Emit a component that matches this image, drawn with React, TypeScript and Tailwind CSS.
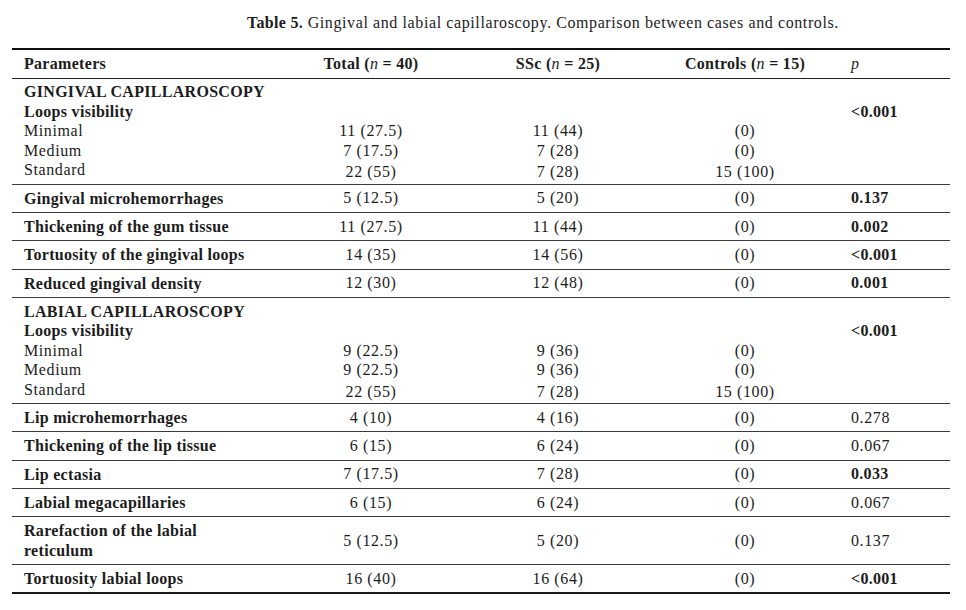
const serif = { fontFamily: '"Liberation Serif", "Times New Roman", serif' };

type Row = {
  label: string;
  total: string;
  ssc: string;
  ctrl: string;
  p: string;
  pBold?: boolean;
  twoLine?: boolean;
};

type Group = {
  title: string;
  p: string;
  lines: { label: string; total: string; ssc: string; ctrl: string }[];
};

const gingival: Group = {
  title: 'GINGIVAL CAPILLAROSCOPY',
  p: '<0.001',
  lines: [
    { label: 'Minimal', total: '11 (27.5)', ssc: '11 (44)', ctrl: '(0)' },
    { label: 'Medium', total: '7 (17.5)', ssc: '7 (28)', ctrl: '(0)' },
    { label: 'Standard', total: '22 (55)', ssc: '7 (28)', ctrl: '15 (100)' },
  ],
};

const gingivalRows: Row[] = [
  { label: 'Gingival microhemorrhages', total: '5 (12.5)', ssc: '5 (20)', ctrl: '(0)', p: '0.137', pBold: true },
  { label: 'Thickening of the gum tissue', total: '11 (27.5)', ssc: '11 (44)', ctrl: '(0)', p: '0.002', pBold: true },
  { label: 'Tortuosity of the gingival loops', total: '14 (35)', ssc: '14 (56)', ctrl: '(0)', p: '<0.001', pBold: true },
  { label: 'Reduced gingival density', total: '12 (30)', ssc: '12 (48)', ctrl: '(0)', p: '0.001', pBold: true },
];

const labial: Group = {
  title: 'LABIAL CAPILLAROSCOPY',
  p: '<0.001',
  lines: [
    { label: 'Minimal', total: '9 (22.5)', ssc: '9 (36)', ctrl: '(0)' },
    { label: 'Medium', total: '9 (22.5)', ssc: '9 (36)', ctrl: '(0)' },
    { label: 'Standard', total: '22 (55)', ssc: '7 (28)', ctrl: '15 (100)' },
  ],
};

const labialRows: Row[] = [
  { label: 'Lip microhemorrhages', total: '4 (10)', ssc: '4 (16)', ctrl: '(0)', p: '0.278' },
  { label: 'Thickening of the lip tissue', total: '6 (15)', ssc: '6 (24)', ctrl: '(0)', p: '0.067' },
  { label: 'Lip ectasia', total: '7 (17.5)', ssc: '7 (28)', ctrl: '(0)', p: '0.033', pBold: true },
  { label: 'Labial megacapillaries', total: '6 (15)', ssc: '6 (24)', ctrl: '(0)', p: '0.067' },
  { label: 'Rarefaction of the labial reticulum', total: '5 (12.5)', ssc: '5 (20)', ctrl: '(0)', p: '0.137', twoLine: true },
  { label: 'Tortuosity labial loops', total: '16 (40)', ssc: '16 (64)', ctrl: '(0)', p: '<0.001', pBold: true },
];

function GroupRows({ g }: { g: Group }) {
  return (
    <>
      <tr>
        <td className="pl-3 pt-[3.75px] font-bold tracking-[0.3px]">{g.title}</td>
        <td />
        <td />
        <td />
        <td />
      </tr>
      <tr>
        <td className="pl-3 font-bold tracking-[0.3px]">Loops visibility</td>
        <td />
        <td />
        <td />
        <td className="pl-[13px] font-bold tracking-[0.3px]">{g.p}</td>
      </tr>
      {g.lines.map((l, i) => (
        <tr key={l.label} className={i === g.lines.length - 1 ? 'border-b border-[#3a3a3a]' : ''}>
          <td className={'pl-3' + (i === g.lines.length - 1 ? ' pb-[3.75px]' : '')}>{l.label}</td>
          <td className="text-center">{l.total}</td>
          <td className="text-center">{l.ssc}</td>
          <td className="text-center">{l.ctrl}</td>
          <td />
        </tr>
      ))}
    </>
  );
}

function SingleRow({ r, last }: { r: Row; last?: boolean }) {
  return (
    <tr className={last ? 'border-b-[2px] border-[#1a1a1a]' : 'border-b border-[#3a3a3a]'}>
      <td className="pt-[4px] pb-[3.85px] pl-3 font-bold tracking-[0.3px]">
        {r.twoLine ? (
          <>
            Rarefaction of the labial
            <br />
            reticulum
          </>
        ) : (
          r.label
        )}
      </td>
      <td className="text-center">{r.total}</td>
      <td className="text-center">{r.ssc}</td>
      <td className="text-center">{r.ctrl}</td>
      <td className={'pl-[13px]' + (r.pBold ? ' font-bold tracking-[0.3px]' : '')}>{r.p}</td>
    </tr>
  );
}

export default function App() {
  return (
    <div className="min-h-[610px] w-[966px] bg-white tracking-[0.6px] text-[#1c1c1c]" style={serif}>
      <div className="pl-[247px] pt-[13px] text-[16px] leading-[20px]">
        <span className="font-bold tracking-[0.3px]">Table 5.</span> Gingival and labial capillaroscopy. Comparison between cases and controls.
      </div>
      <table className="ml-3 mt-[15px] w-[938px] table-fixed border-collapse text-[16px] leading-[19.5px]">
        <colgroup>
          <col className="w-[266px]" />
          <col className="w-[186px]" />
          <col className="w-[188px]" />
          <col className="w-[186px]" />
          <col className="w-[112px]" />
        </colgroup>
        <thead>
          <tr className="border-y border-t-[2px] border-b-[1px] border-t-[#111] border-b-[#222]">
            <th className="py-[4px] pl-3 text-left font-semibold tracking-[0.3px]">Parameters</th>
            <th className="text-center font-semibold tracking-[0.3px]">
              Total (<i className="font-normal">n</i> = 40)
            </th>
            <th className="text-center font-semibold tracking-[0.3px]">
              SSc (<i className="font-normal">n</i> = 25)
            </th>
            <th className="text-center font-semibold tracking-[0.3px]">
              Controls (<i className="font-normal">n</i> = 15)
            </th>
            <th className="pl-[13px] text-left font-normal italic">p</th>
          </tr>
        </thead>
        <tbody>
          <GroupRows g={gingival} />
          {gingivalRows.map((r) => (
            <SingleRow key={r.label} r={r} />
          ))}
          <GroupRows g={labial} />
          {labialRows.map((r, i) => (
            <SingleRow key={r.label} r={r} last={i === labialRows.length - 1} />
          ))}
        </tbody>
      </table>
    </div>
  );
}
